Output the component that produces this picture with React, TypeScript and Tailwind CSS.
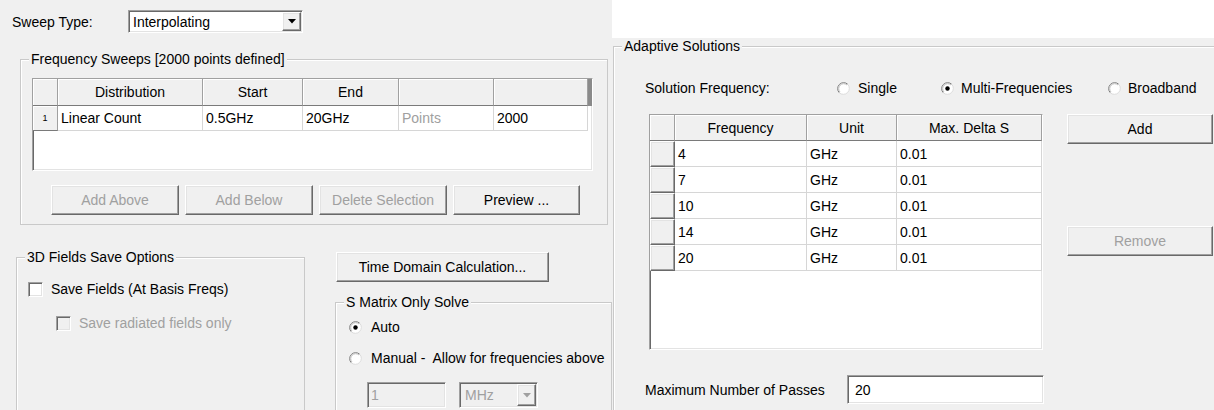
import React from "react";

// Classic Windows 3D edges
const raised =
  "border border-t-white border-l-white border-r-[#696969] border-b-[#696969] shadow-[inset_-1px_-1px_0_#a0a0a0,inset_1px_1px_0_#e3e3e3]";
const sunken =
  "border border-t-[#a0a0a0] border-l-[#a0a0a0] border-r-white border-b-white shadow-[inset_1px_1px_0_#696969,inset_-1px_-1px_0_#e3e3e3]";

function GroupBox({
  title,
  className = "",
  children,
}: {
  title: string;
  className?: string;
  children?: React.ReactNode;
}) {
  return (
    <div className={`relative border border-[#c9c9c9] shadow-[inset_1px_1px_0_#ffffff] ${className}`}>
      <span className="absolute left-[8px] top-[-10px] bg-[#f0f0f0] px-[2px] leading-[18px] whitespace-nowrap">
        {title}
      </span>
      {children}
    </div>
  );
}

function Btn({
  label,
  disabled = false,
  className = "",
}: {
  label: string;
  disabled?: boolean;
  className?: string;
}) {
  return (
    <button
      type="button"
      className={`flex items-center justify-center bg-[#f0f0f0] ${raised} ${
        disabled ? "text-[#a0a0a0]" : "text-black"
      } ${className}`}
    >
      {label}
    </button>
  );
}

function DownArrow({ color = "#000" }: { color?: string }) {
  return (
    <svg width="8" height="5" viewBox="0 0 8 5">
      <polygon points="0,0 8,0 4,4.5" fill={color} />
    </svg>
  );
}

function Radio({ checked = false }: { checked?: boolean }) {
  return (
    <svg width="15" height="15" viewBox="0 0 15 15" className="shrink-0">
      <circle cx="7.5" cy="7.5" r="6" fill="#ffffff" />
      <path d="M3.26 11.74 A6 6 0 0 1 11.74 3.26" stroke="#7d7d7d" fill="none" />
      <path d="M11.74 3.26 A6 6 0 0 1 3.26 11.74" stroke="#dcdcdc" fill="none" />
      <path d="M3.97 11.03 A5 5 0 0 1 11.03 3.97" stroke="#bdbdbd" fill="none" />
      {checked && <circle cx="7.5" cy="7.5" r="2.2" fill="#000000" />}
    </svg>
  );
}

function Check({ disabled = false }: { disabled?: boolean }) {
  return (
    <span
      className={`block w-[15px] h-[15px] shrink-0 ${sunken} ${disabled ? "bg-[#f0f0f0]" : "bg-white"}`}
    />
  );
}

const headCell =
  "flex items-center justify-center bg-[#f0f0f0] border-r border-b border-r-[#a0a0a0] border-b-[#7a7a7a] shadow-[inset_1px_1px_0_#ffffff]";
const dataCell = "flex items-center px-[3px] border-r border-b border-[#d6d6d6] whitespace-nowrap";

function SweepTable() {
  return (
    <div className={`w-[561px] h-[93px] bg-white ${sunken} flex flex-col overflow-hidden`}>
      <div className="flex h-[27px] shrink-0">
        <div className={`${headCell} w-[25px]`} />
        <div className={`${headCell} w-[145px]`}>Distribution</div>
        <div className={`${headCell} w-[100px]`}>Start</div>
        <div className={`${headCell} w-[96px]`}>End</div>
        <div className={`${headCell} w-[95px]`} />
        <div className={`${headCell} w-[94px]`} />
        <div className="flex-1 bg-[#8a8a8a]" />
      </div>
      <div className="flex h-[25px] shrink-0">
        <div className={`${headCell} w-[25px] items-start pt-[3px] text-[9px]`}>1</div>
        <div className={`${dataCell} w-[145px]`}>Linear Count</div>
        <div className={`${dataCell} w-[100px]`}>0.5GHz</div>
        <div className={`${dataCell} w-[96px]`}>20GHz</div>
        <div className={`${dataCell} w-[95px] text-[#a0a0a0]`}>Points</div>
        <div className={`${dataCell} w-[94px]`}>2000</div>
      </div>
    </div>
  );
}

const freqRows = ["4", "7", "10", "14", "20"];

function FreqTable() {
  return (
    <div className={`w-[394px] h-[236px] bg-white ${sunken} flex flex-col overflow-hidden`}>
      <div className="flex h-[26px] shrink-0">
        <div className={`${headCell} w-[25px]`} />
        <div className={`${headCell} w-[132px]`}>Frequency</div>
        <div className={`${headCell} w-[90px]`}>Unit</div>
        <div className={`${headCell} w-[145px]`}>Max. Delta S</div>
      </div>
      {freqRows.map((f) => (
        <div key={f} className="flex h-[26px] shrink-0">
          <div className={`w-[25px] bg-[#f0f0f0] ${raised}`} />
          <div className={`${dataCell} w-[132px]`}>{f}</div>
          <div className={`${dataCell} w-[90px]`}>GHz</div>
          <div className={`${dataCell} w-[145px]`}>0.01</div>
        </div>
      ))}
    </div>
  );
}

function LeftPanel() {
  return (
    <div className="w-[612px] h-full shrink-0 bg-[#f0f0f0] flex flex-col pt-[10px] overflow-hidden">
      {/* Sweep type selector */}
      <div className="flex items-center h-[23px] shrink-0">
        <span className="ml-[12px] w-[116px]">Sweep Type:</span>
        <div className={`w-[175px] h-[23px] bg-white ${sunken} flex items-center`}>
          <span className="flex-1 pl-[4px]">Interpolating</span>
          <div className={`w-[19px] h-[19px] mr-[1px] bg-[#f0f0f0] ${raised} flex items-center justify-center`}>
            <DownArrow />
          </div>
        </div>
      </div>

      {/* Frequency sweeps */}
      <GroupBox
        title="Frequency Sweeps [2000 points defined]"
        className="ml-[20px] mt-[26px] w-[588px] h-[166px] shrink-0"
      >
        <div className="pl-[11px] pt-[18px] flex flex-col">
          <SweepTable />
          <div className="flex gap-[6px] ml-[19px] mt-[14px]">
            <Btn label="Add Above" disabled className="w-[128px] h-[30px]" />
            <Btn label="Add Below" disabled className="w-[128px] h-[30px]" />
            <Btn label="Delete Selection" disabled className="w-[128px] h-[30px]" />
            <Btn label="Preview ..." className="w-[127px] h-[30px]" />
          </div>
        </div>
      </GroupBox>

      {/* Lower options */}
      <div className="flex mt-[27px] flex-1">
        <GroupBox
          title="3D Fields Save Options"
          className="ml-[16px] mt-[5px] w-[289px] h-[170px] shrink-0"
        >
          <div className="flex flex-col pl-[11px] pt-[22px]">
            <label className="flex items-center gap-[8px] h-[18px]">
              <Check />
              <span>Save Fields (At Basis Freqs)</span>
            </label>
            <label className="flex items-center gap-[8px] h-[18px] mt-[16px] ml-[28px] text-[#a0a0a0]">
              <Check disabled />
              <span>Save radiated fields only</span>
            </label>
          </div>
        </GroupBox>

        <div className="ml-[30px] flex flex-col flex-1">
          <Btn label="Time Domain Calculation..." className="ml-[1px] w-[213px] h-[30px]" />
          <GroupBox title="S Matrix Only Solve" className="mt-[20px] w-[277px] h-[140px]">
            <div className="flex flex-col pl-[12px] pt-[15px]">
              <label className="flex items-center gap-[8px] h-[18px]">
                <Radio checked />
                <span>Auto</span>
              </label>
              <label className="flex items-center gap-[8px] h-[18px] mt-[13px]">
                <Radio />
                <span className="whitespace-nowrap">Manual -&nbsp; Allow for frequencies above</span>
              </label>
              <div className="flex gap-[13px] ml-[19px] mt-[15px]">
                <div className={`w-[79px] h-[26px] bg-[#f0f0f0] ${sunken} flex items-center pl-[3px] text-[#a0a0a0]`}>
                  1
                </div>
                <div className={`w-[79px] h-[26px] bg-[#f0f0f0] ${sunken} flex items-center text-[#a0a0a0]`}>
                  <span className="flex-1 pl-[5px]">MHz</span>
                  <div className={`w-[19px] h-[22px] mr-[1px] bg-[#f0f0f0] ${raised} flex items-center justify-center`}>
                    <DownArrow color="#a0a0a0" />
                  </div>
                </div>
              </div>
            </div>
          </GroupBox>
        </div>
      </div>
    </div>
  );
}

function RightPanel() {
  return (
    <div className="flex-1 h-full flex flex-col bg-white overflow-hidden">
      <div className="h-[38px] shrink-0 bg-white" />
      <div className="flex-1 bg-[#f0f0f0] pt-[8px] pl-[1px] overflow-hidden">
        <GroupBox title="Adaptive Solutions" className="w-[640px] h-[400px]">
          <div className="flex flex-col pt-[31px]">
            {/* Solution frequency choice */}
            <div className="flex items-center h-[20px] pl-[31px]">
              <span className="w-[191px]">Solution Frequency:</span>
              <label className="flex items-center gap-[7px] w-[104px]">
                <Radio />
                <span>Single</span>
              </label>
              <label className="flex items-center gap-[6px] w-[167px]">
                <Radio checked />
                <span>Multi-Frequencies</span>
              </label>
              <label className="flex items-center gap-[6px]">
                <Radio />
                <span>Broadband</span>
              </label>
            </div>

            {/* Frequency list with actions */}
            <div className="flex mt-[16px] pl-[35px]">
              <FreqTable />
              <div className="flex flex-col ml-[24px]">
                <Btn label="Add" className="w-[146px] h-[30px]" />
                <Btn label="Remove" disabled className="w-[146px] h-[30px] mt-[82px]" />
              </div>
            </div>

            {/* Pass limit */}
            <div className="flex items-center mt-[25px] pl-[31px]">
              <span className="w-[202px]">Maximum Number of Passes</span>
              <div className={`w-[197px] h-[29px] bg-white ${sunken} flex items-center pl-[7px]`}>20</div>
            </div>
          </div>
        </GroupBox>
      </div>
    </div>
  );
}

export default function App() {
  return (
    <div className="w-[1214px] h-[410px] flex overflow-hidden bg-white text-[14px] leading-[18px] text-black font-['Liberation_Sans',Arial,sans-serif]">
      <LeftPanel />
      <RightPanel />
    </div>
  );
}
